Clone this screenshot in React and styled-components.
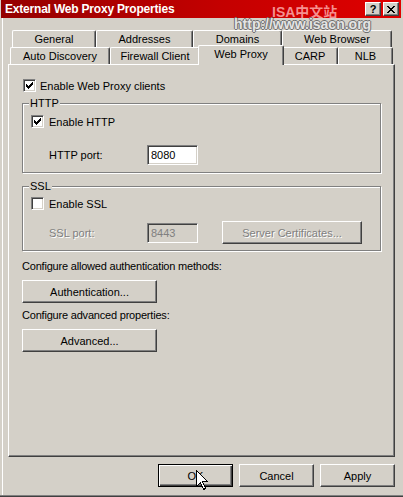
import React from "react";
import styled, { createGlobalStyle } from "styled-components";

const GlobalStyle = createGlobalStyle`
  html, body {
    margin: 0;
    padding: 0;
    background: #d4d0c8;
  }
  body {
    font-family: "Liberation Sans", Arial, sans-serif;
    font-size: 11px;
    color: #000;
  }
`;

const Window = styled.div`
  position: relative;
  width: 403px;
  height: 497px;
  box-sizing: border-box;
  padding: 0 2px 2px 1px;
  background: #d4d0c8;
  box-shadow: inset 0 -1px 0 #404040, inset 0 -2px 0 #808080;
  display: flex;
  flex-direction: column;
  overflow: hidden;
`;

const TitleBar = styled.div`
  height: 18px;
  flex: none;
  display: flex;
  align-items: center;
  padding: 0 2px 0 4px;
  background: linear-gradient(to right, #940000, #c40000 55%, #e00000);
  color: #fff;
  font-weight: bold;
  font-size: 12px;
  letter-spacing: -0.2px;
`;

const Caption = styled.div`
  flex: 1;
  white-space: nowrap;
`;

const CaptionButton = styled.div`
  width: 16px;
  height: 14px;
  box-sizing: border-box;
  margin-left: ${(p) => (p.$gap ? 2 : 0)}px;
  background: #d4d0c8;
  border-top: 1px solid #fff;
  border-left: 1px solid #fff;
  border-right: 1px solid #404040;
  border-bottom: 1px solid #404040;
  box-shadow: inset -1px -1px 0 #808080;
  display: flex;
  align-items: center;
  justify-content: center;
  color: #000;
  font-size: 11px;
  font-weight: bold;
  letter-spacing: 0;
  line-height: 1;
`;

const Body = styled.div`
  flex: 1;
  display: flex;
  flex-direction: column;
  margin-left: 1px;
  border-left: 1px solid #fff;
  padding: 12px 6px 0 5px;
`;

const TabRow = styled.div`
  display: flex;
  align-items: flex-end;
  height: 17px;
  margin-left: ${(p) => p.$indent}px;
`;

const Tab = styled.div`
  position: relative;
  flex: none;
  width: ${(p) => p.$w}px;
  height: ${(p) => (p.$active ? 20 : 17)}px;
  margin: ${(p) => (p.$active ? "0 -2px -1px -2px" : "0")};
  z-index: ${(p) => (p.$active ? 1 : 0)};
  box-sizing: border-box;
  background: #d4d0c8;
  border-top: 1px solid #fff;
  border-left: 1px solid #fff;
  border-right: 1px solid #404040;
  border-radius: 2px 2px 0 0;
  box-shadow: inset -1px 0 0 #808080;
  text-align: center;
  line-height: ${(p) => (p.$active ? 17 : 16)}px;
  white-space: nowrap;
`;

const Panel = styled.div`
  height: 393px;
  box-sizing: border-box;
  border-top: 1px solid #fff;
  border-left: 1px solid #fff;
  border-right: 1px solid #404040;
  border-bottom: 1px solid #404040;
  box-shadow: inset -1px -1px 0 #808080;
  padding: 14px 13px 0 13px;
  display: flex;
  flex-direction: column;
`;

const CheckRow = styled.label`
  display: flex;
  align-items: center;
  gap: ${(p) => p.$gap || 5}px;
  height: 13px;
  margin-left: ${(p) => p.$indent || 0}px;
  white-space: nowrap;
`;

const Box = styled.span`
  width: 13px;
  height: 13px;
  flex: none;
  box-sizing: border-box;
  background: #fff;
  border: 1px solid;
  border-color: #808080 #fff #fff #808080;
  box-shadow: inset 1px 1px 0 #404040, inset -1px -1px 0 #d4d0c8;
  position: relative;

  svg {
    position: absolute;
    left: -1px;
    top: -1px;
  }
`;

const Group = styled.fieldset`
  margin: ${(p) => p.$top}px 0 0 0;
  padding: ${(p) => p.$padTop}px 8px ${(p) => p.$padBottom}px 8px;
  border: 1px solid #808080;
  box-shadow: inset 1px 1px 0 #fff, 1px 1px 0 #fff;
  min-width: 0;
`;

const Legend = styled.legend`
  padding: 0 1px;
  margin-left: -2px;
  line-height: 13px;
  background: #d4d0c8;
`;

const FieldRow = styled.div`
  display: flex;
  align-items: center;
  height: ${(p) => p.$h}px;
  margin-top: ${(p) => p.$top}px;
`;

const FieldLabel = styled.span`
  width: 98px;
  flex: none;
  padding-left: 18px;
  color: ${(p) => (p.$disabled ? "#808080" : "#000")};
  text-shadow: ${(p) => (p.$disabled ? "1px 1px 0 #fff" : "none")};
`;

const TextBox = styled.div`
  width: 51px;
  height: 20px;
  box-sizing: border-box;
  flex: none;
  border: 1px solid;
  border-color: #808080 #fff #fff #808080;
  box-shadow: inset 1px 1px 0 #404040, inset -1px -1px 0 #d4d0c8;
  background: ${(p) => (p.$disabled ? "#d4d0c8" : "#fff")};
  color: ${(p) => (p.$disabled ? "#808080" : "#000")};
  padding-left: 3px;
  line-height: 18px;
`;

const Button = styled.div`
  width: ${(p) => p.$w || 75}px;
  height: 23px;
  box-sizing: border-box;
  flex: none;
  background: #d4d0c8;
  margin-left: ${(p) => p.$left || 0}px;
  ${(p) =>
    p.$default
      ? `border: 1px solid #000;
         box-shadow: inset 1px 1px 0 #fff, inset -1px -1px 0 #404040, inset -2px -2px 0 #808080;`
      : `border-top: 1px solid #fff;
         border-left: 1px solid #fff;
         border-right: 1px solid #404040;
         border-bottom: 1px solid #404040;
         box-shadow: inset -1px -1px 0 #808080;`}
  display: flex;
  align-items: center;
  justify-content: center;
  color: ${(p) => (p.$disabled ? "#808080" : "#000")};
  text-shadow: ${(p) => (p.$disabled ? "1px 1px 0 #fff" : "none")};
  white-space: nowrap;
`;

const Note = styled.div`
  line-height: 13px;
  margin-top: ${(p) => p.$top}px;
  letter-spacing: -0.2px;
  white-space: nowrap;
`;

const PanelButton = styled(Button)`
  margin-top: 7px;
`;

const Footer = styled.div`
  display: flex;
  justify-content: flex-end;
  gap: 6px;
  margin-top: 7px;
`;

const WatermarkTitle = styled.div`
  position: absolute;
  left: 272px;
  top: 1px;
  font-family: "Liberation Sans", "Noto Sans CJK SC", sans-serif;
  font-weight: bold;
  font-size: 14px;
  color: rgba(255, 185, 185, 0.78);
  white-space: nowrap;
  pointer-events: none;
`;

const WatermarkUrl = styled.div`
  position: absolute;
  left: 234px;
  top: 16px;
  font-family: "Liberation Sans", Arial, sans-serif;
  font-weight: bold;
  font-size: 14px;
  color: #e4e4e4;
  text-shadow: 1px 0 0 #707070, -1px 0 0 #707070, 0 1px 0 #707070,
    0 -1px 0 #707070;
  white-space: nowrap;
  pointer-events: none;
`;

const Pointer = styled.svg`
  position: absolute;
  left: 196px;
  top: 470px;
`;

// classic 7x7 pixel check mark, drawn in the 13x13 box space
const checkPixels = [
  [9, 3, 1],
  [8, 4, 2],
  [3, 5, 1],
  [7, 5, 3],
  [3, 6, 2],
  [6, 6, 3],
  [3, 7, 5],
  [4, 8, 3],
  [5, 9, 1],
];

const Checkbox = ({ checked }) => (
  <Box>
    {checked && (
      <svg width="13" height="13" shapeRendering="crispEdges">
        {checkPixels.map(([x, y, w]) => (
          <rect key={`${x}-${y}`} x={x} y={y} width={w} height="1" fill="#000" />
        ))}
      </svg>
    )}
  </Box>
);

const backTabs = [
  { label: "General", w: 84 },
  { label: "Addresses", w: 97 },
  { label: "Domains", w: 89 },
  { label: "Web Browser", w: 110 },
];

const frontTabs = [
  { label: "Auto Discovery", w: 100 },
  { label: "Firewall Client", w: 90 },
  { label: "Web Proxy", w: 86, active: true },
  { label: "CARP", w: 56 },
  { label: "NLB", w: 55 },
];

const App = () => {
  return (
    <>
      <GlobalStyle />
      <Window>
        <TitleBar>
          <Caption>External Web Proxy Properties</Caption>
          <CaptionButton>?</CaptionButton>
          <CaptionButton $gap>
            <svg width="8" height="7" shapeRendering="crispEdges">
              <path
                d="M0 0h2v1H0zM6 0h2v1H6zM1 1h2v1H1zM5 1h2v1H5zM2 2h4v1H2zM3 3h2v1H3zM2 4h4v1H2zM1 5h2v1H1zM5 5h2v1H5zM0 6h2v1H0zM6 6h2v1H6z"
                fill="#000"
              />
            </svg>
          </CaptionButton>
        </TitleBar>

        <Body>
          <TabRow $indent={4}>
            {backTabs.map((t) => (
              <Tab key={t.label} $w={t.w}>
                {t.label}
              </Tab>
            ))}
          </TabRow>
          <TabRow $indent={2}>
            {frontTabs.map((t) => (
              <Tab key={t.label} $w={t.w} $active={t.active}>
                {t.label}
              </Tab>
            ))}
          </TabRow>

          <Panel>
            <CheckRow $indent={1} $gap={4}>
              <Checkbox checked />
              Enable Web Proxy clients
            </CheckRow>

            <Group $top={5} $padTop={5} $padBottom={7}>
              <Legend>HTTP</Legend>
              <CheckRow>
                <Checkbox checked />
                Enable HTTP
              </CheckRow>
              <FieldRow $h={20} $top={17}>
                <FieldLabel>HTTP port:</FieldLabel>
                <TextBox>8080</TextBox>
              </FieldRow>
            </Group>

            <Group $top={7} $padTop={4} $padBottom={6}>
              <Legend>SSL</Legend>
              <CheckRow>
                <Checkbox />
                Enable SSL
              </CheckRow>
              <FieldRow $h={23} $top={11}>
                <FieldLabel $disabled>SSL port:</FieldLabel>
                <TextBox $disabled>8443</TextBox>
                <Button $w={140} $left={24} $disabled>
                  Server Certificates...
                </Button>
              </FieldRow>
            </Group>

            <Note $top={9}>Configure allowed authentication methods:</Note>
            <PanelButton $w={135}>Authentication...</PanelButton>
            <Note $top={6}>Configure advanced properties:</Note>
            <PanelButton $w={135}>Advanced...</PanelButton>
          </Panel>

          <Footer>
            <Button $default>OK</Button>
            <Button>Cancel</Button>
            <Button>Apply</Button>
          </Footer>
        </Body>

        <WatermarkTitle>ISA中文站</WatermarkTitle>
        <WatermarkUrl>http://www.isacn.org</WatermarkUrl>

        <Pointer width="13" height="21" viewBox="0 0 13 21" shapeRendering="crispEdges">
          <path
            d="M0.5 0.5 L0.5 16.5 L4.5 12.5 L7.5 19.5 L9.5 18.5 L6.5 11.5 L11.5 11.5 Z"
            fill="#fff"
            stroke="#000"
            strokeWidth="1"
          />
        </Pointer>
      </Window>
    </>
  );
};

export default App;
